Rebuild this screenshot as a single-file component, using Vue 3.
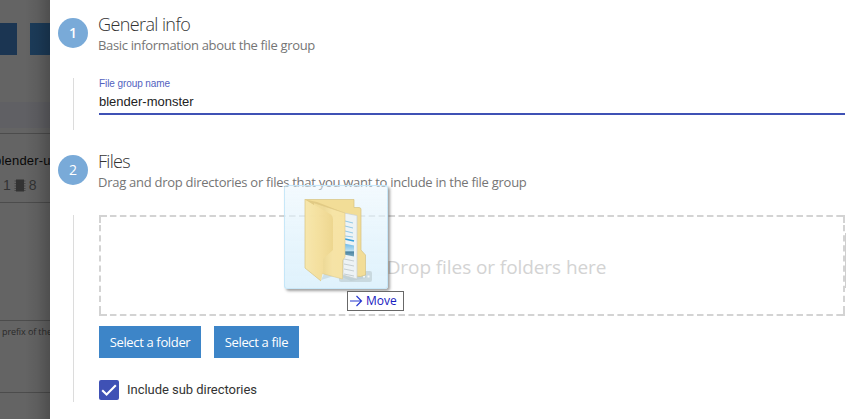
<script setup>
import { ref } from 'vue'

const groupName = ref('blender-monster')
const includeSub = ref(true)
</script>

<template>
  <div class="page">
    <aside class="backdrop">
      <div class="toolbar"><span class="tool first"></span><span class="tool"></span></div>
      <div class="band"></div>
      <div class="card-head">
        <div class="card-title">blender-u</div>
        <div class="card-meta">
          <span>1</span>
          <svg width="12" height="13" viewBox="0 0 12 13"><path class="pins" d="M.5 1.500h11v1H.5zM.5 4h11v1H.5zM.5 6.500h11v1H.5zM.5 9h11v1H.5zM.5 11h11v1H.5z" /><path d="M2 .5h8v12H2z" /></svg>
          <span>8</span>
        </div>
      </div>
      <div class="card-body"></div>
      <div class="card-hint">prefix of the</div>
      <div class="card-foot"></div>
    </aside>

    <main class="dialog">
      <section class="step general">
        <div class="badge">1</div>
        <header>
          <h2 class="t-general">General info</h2>
          <p class="s-general">Basic information about the file group</p>
        </header>
        <div class="rail"></div>
        <div class="field">
          <label>File group name</label>
          <div class="value">{{ groupName }}</div>
        </div>
      </section>

      <section class="step files">
        <div class="badge">2</div>
        <header>
          <h2 class="t-files">Files</h2>
          <p class="s-files">Drag and drop directories or files that you want to include in the file group</p>
        </header>
        <div class="rail"></div>
        <div class="content">
          <div class="dropzone">
            <svg class="outline" width="746" height="101" viewBox="0 0 746 101">
              <path d="M0 1H746M0 100H746" stroke-dasharray="6.5 3.45" stroke-dashoffset="-1" />
              <path d="M1 0V101M745 0V101" stroke-dasharray="6.2 3.9" />
              <path d="M0 1H8M1 0V8M738 1H746M745 0V8M0 100H8M1 93V101M738 100H746M745 93V101" />
            </svg>
            <span>Drop files or folders here</span>
          </div>
          <div class="actions">
            <button class="folder-btn"><span>Select a folder</span></button>
            <button class="file-btn"><span>Select a file</span></button>
          </div>
          <div class="check">
            <span class="box">
              <svg v-if="includeSub" width="20" height="20" viewBox="0 0 20 20"><path d="M3.2 10.2L7.6 14.6L16.8 5.3" /></svg>
            </span>
            <span class="check-label">Include sub directories</span>
          </div>
        </div>
      </section>
    </main>

    <div class="scroll"></div>

    <div class="drag">
      <svg width="102" height="102" viewBox="0 0 102 102">
        <defs>
          <linearGradient id="front" x1="0" x2="1">
            <stop offset="0" stop-color="#f3dd94" /><stop offset=".35" stop-color="#efd993" />
            <stop offset=".6" stop-color="#f7e3a2" /><stop offset="1" stop-color="#f8e3a0" />
          </linearGradient>
          <linearGradient id="side" x1="0" x2="1">
            <stop offset="0" stop-color="#f8e7a9" /><stop offset=".6" stop-color="#f4dd97" />
            <stop offset="1" stop-color="#eed58a" />
          </linearGradient>
          <linearGradient id="photo" x1="0" x2="0" y1="0" y2="1">
            <stop offset="0" stop-color="#68b8e9" /><stop offset=".55" stop-color="#b9dff1" />
            <stop offset=".65" stop-color="#477f9d" /><stop offset="1" stop-color="#6fa5bd" />
          </linearGradient>
        </defs>
        <path d="M36 94l16-5 14 6 15-3v-6H40z" fill="#a9bdc5" opacity=".4" />
        <rect x="54" y="85" width="33" height="11" rx="2" fill="#b7c6ca" opacity=".6" />
        <path d="M78 89.500h2v2h-2zM82.500 89.500h2v2h-2z" fill="#f4f8f8" />
        <path d="M20 13.500h49v8h5q2 0 2 2V64l4.500 5v20l-5 1.500-16-1z" fill="#f3dc92" stroke="#d6c07c" stroke-width=".7" />
        <path d="M59 27l13 2.500v63.500l-14-4z" fill="#eef3f5" stroke="#c5ced0" stroke-width=".7" />
        <path d="M60 35l8 2M60 40l8 2M60 45l8 2M60 50l8 1" stroke="#8ec7e5" />
        <path d="M60 53l9 2" stroke="#2d9cdb" stroke-width="1.500" />
        <path d="M59 57.500l10 2v11l-10-2z" fill="url(#photo)" />
        <path d="M59 73l10 2M59 78l10 2M59 83l10 2M59 88l10 2" stroke="#c4cdd0" />
        <path d="M28 16.500L60 27v44l-2.500 3.500V93L37 87.500z" fill="url(#front)" stroke="#ddc886" stroke-width=".6" />
        <path d="M20 13.500l26 15q2 2 2 5V64l-10 9v12l-2 10L20 82z" fill="url(#side)" />
        <path d="M20 13.500V82l16 13" fill="none" stroke="#d9c27a" stroke-width=".7" />
        <path d="M20 13.500l12 2.500 28 11-31-10 0 2z" fill="#e1c87e" />
      </svg>
    </div>
    <div class="tip">
      <svg width="14" height="12" viewBox="0 0 14 12"><path d="M1 6H12.500M7.500 1L12.500 6L7.500 11" /></svg>
      <span>Move</span>
    </div>
  </div>
</template>

<style>
body { overflow: hidden; background: #fff; }
</style>

<style scoped>
* { box-sizing: border-box; }
.page { position: relative; display: flex; width: 848px; height: 419px; overflow: hidden; background: #fff; font-family: "Open Sans", sans-serif; white-space: nowrap; }
.backdrop { position: relative; width: 50px; height: 419px; flex: none; overflow: hidden; background: #646464; font-family: "Liberation Sans", sans-serif; }
.backdrop::after { content: ""; position: absolute; inset: 0; background: linear-gradient(90deg, transparent 50%, rgba(0, 0, 0, .07) 75%, rgba(0, 0, 0, .22)); }
.toolbar { height: 102px; padding-top: 23px; display: flex; gap: 13px; }
.tool { width: 20px; height: 32px; background: #1c3c5a; }
.tool.first { width: 17px; background: #1b3552; }
.band { height: 26px; background: #606064; }
.card-head { height: 70px; margin-top: 5px; border-top: 1px solid #4c4c4c; border-bottom: 1px solid #4c4c4c; padding-top: 19px; }
.card-title { margin-left: -6px; font: 13px/16px "Liberation Sans", sans-serif; letter-spacing: .2px; color: #080808; }
.card-meta { display: flex; align-items: center; height: 16px; margin-top: 8px; padding-left: 3px; font-size: 14px; color: #333; }
.card-meta svg { margin: 0 3px; fill: #333; }
.pins { opacity: .6; }
.card-body { height: 118px; border-bottom: 1px solid #4c4c4c; }
.card-hint { height: 72px; padding: 5px 0 0 2px; border-bottom: 1px solid #4c4c4c; font: 9px/12px "Open Sans", sans-serif; letter-spacing: -.1px; color: #292929; }
.card-foot { height: 26px; }

.dialog { flex: none; width: 795px; padding-left: 8px; }
.step { display: grid; grid-template-columns: 30px 747px; column-gap: 10px; }
.general { height: 137px; grid-template-rows: 78px 52px; }
.files { height: 282px; grid-template-rows: 78px 187px; }
.badge { width: 30px; height: 30px; margin-top: 18px; border-radius: 50%; background: #79aad8; color: #fff; font-size: 14px; font-weight: 600; line-height: 30px; text-align: center; }
.files .badge { font-weight: 500; }
header { padding-top: 12px; }
h2 { margin: 0; font-size: 18px; line-height: 25px; font-weight: 300; color: #333; }
p { margin: 0; font-size: 13px; line-height: 17px; color: #757575; }
.t-general { letter-spacing: -.6px; }
.t-files { letter-spacing: -.7px; }
.s-general { letter-spacing: -.34px; }
.s-files { letter-spacing: -.27px; }
.rail { width: 1px; margin-left: 15px; background: #dcdcdc; }
.field { margin-left: 1px; height: 37px; border-bottom: 2px solid #3f51b5; font-family: "Liberation Sans", sans-serif; }
.field label { display: block; font-size: 10px; line-height: 12px; letter-spacing: -.08px; color: #5262c0; }
.value { margin-top: 4px; font-size: 13px; line-height: 16px; color: #222; }
.content { margin-left: 1px; }
.dropzone { position: relative; display: flex; justify-content: center; width: 746px; height: 101px; padding: 39px 0 0 49px; font-size: 19px; line-height: 26px; color: #d3d3d3; letter-spacing: -.08px; }
.outline { position: absolute; inset: 0; fill: none; stroke: #d3d3d3; stroke-width: 2; }
.actions { display: flex; gap: 13px; margin-top: 10px; }
button { height: 32px; padding: 0; border: 0; background: #3d85c8; color: #fff; font: 500 13px/32px "Open Sans", sans-serif; letter-spacing: -.35px; }
.folder-btn { width: 102px; }
.file-btn { width: 85px; }
.check { display: flex; align-items: center; gap: 8px; margin-top: 22px; height: 20px; }
.box { width: 20px; height: 20px; border-radius: 2px; background: #3f51b5; }
.box svg { display: block; fill: none; stroke: #fff; stroke-width: 2.100; }
.check-label { font: 13px/20px Roboto, sans-serif; letter-spacing: -.04px; color: #333; }
.scroll { width: 1px; height: 55px; margin-top: 233px; background: #cfcfcf; }
.drag { position: absolute; left: 284px; top: 185px; width: 104px; height: 104px; border: 1px solid rgba(190, 228, 247, .8); border-radius: 3px; background: linear-gradient(rgba(232, 245, 253, .5), rgba(226, 243, 252, .72) 40%, rgba(221, 241, 252, .94)); box-shadow: 2px 2px 3px rgba(0, 0, 0, .38); }
.drag svg { display: block; opacity: .95; }
.tip { position: absolute; left: 347px; top: 291px; display: flex; align-items: center; width: 57px; height: 20px; padding-left: 1px; gap: 3px; border: 1px solid #686868; background: #fff; color: #1720c0; font-size: 12px; line-height: 18px; }
.tip svg { fill: none; stroke: #2638d0; stroke-width: 1.200; }
</style>
